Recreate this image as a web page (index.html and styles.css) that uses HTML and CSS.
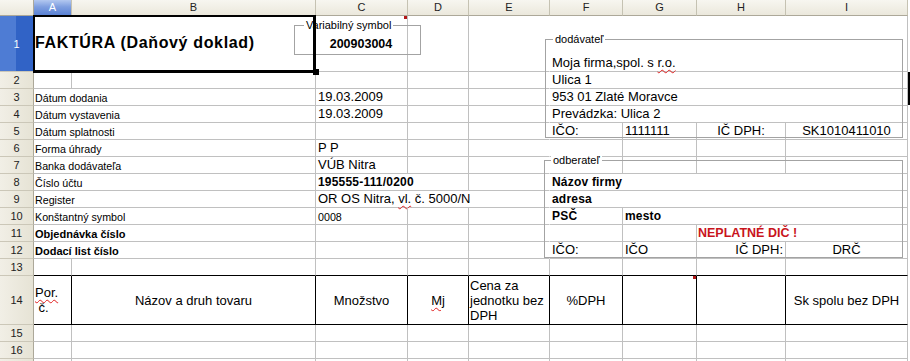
FILE: index.html
```html
<!DOCTYPE html>
<html lang="sk">
<head>
<meta charset="utf-8">
<title>Faktúra</title>
<link rel="stylesheet" href="styles.css">
</head>
<body>
<div class="sheet">
  <!-- column headers -->
  <div class="ch corner"></div>
  <div class="ch ch-sel">A</div>
  <div class="ch">B</div>
  <div class="ch">C</div>
  <div class="ch">D</div>
  <div class="ch">E</div>
  <div class="ch">F</div>
  <div class="ch">G</div>
  <div class="ch">H</div>
  <div class="ch">I</div>

  <!-- row 1 -->
  <div class="rh rh-sel">1</div>
  <div class="c s2 mid title">FAKTÚRA (Daňový doklad)</div>
  <div class="c"><span class="note"></span></div>
  <div class="c"></div>
  <div class="c nr"></div>
  <div class="c s4">Moja firma,spol. s&nbsp;<span class="sp">r.o.</span></div>

  <!-- row 2 -->
  <div class="rh">2</div>
  <div class="c"></div>
  <div class="c"></div>
  <div class="c"></div>
  <div class="c"></div>
  <div class="c nr"></div>
  <div class="c s4">Ulica 1</div>

  <!-- row 3 -->
  <div class="rh">3</div>
  <div class="c s2 lbl">Dátum dodania</div>
  <div class="c">19.03.2009</div>
  <div class="c"></div>
  <div class="c nr"></div>
  <div class="c s4">953 01 Zlaté Moravce</div>

  <!-- row 4 -->
  <div class="rh">4</div>
  <div class="c s2 lbl">Dátum vystavenia</div>
  <div class="c">19.03.2009</div>
  <div class="c"></div>
  <div class="c nr"></div>
  <div class="c s4">Prevádzka: Ulica 2</div>

  <!-- row 5 -->
  <div class="rh">5</div>
  <div class="c s2 lbl">Dátum splatnosti</div>
  <div class="c"></div>
  <div class="c"></div>
  <div class="c nr"></div>
  <div class="c">IČO:</div>
  <div class="c">1111111</div>
  <div class="c ctr">IČ DPH:</div>
  <div class="c ctr">SK1010411010</div>

  <!-- row 6 -->
  <div class="rh">6</div>
  <div class="c s2 lbl">Forma úhrady</div>
  <div class="c">P P</div>
  <div class="c"></div>
  <div class="c nr"></div>
  <div class="c"></div>
  <div class="c"></div>
  <div class="c"></div>
  <div class="c"></div>

  <!-- row 7 -->
  <div class="rh">7</div>
  <div class="c s2 lbl">Banka dodávateľa</div>
  <div class="c">VÚB Nitra</div>
  <div class="c"></div>
  <div class="c nr"></div>
  <div class="c"></div>
  <div class="c"></div>
  <div class="c"></div>
  <div class="c"></div>

  <!-- row 8 -->
  <div class="rh">8</div>
  <div class="c s2 lbl">Číslo účtu</div>
  <div class="c s2 b">195555-111/0200</div>
  <div class="c nr"></div>
  <div class="c s4 b">Názov firmy</div>

  <!-- row 9 -->
  <div class="rh">9</div>
  <div class="c s2 lbl">Register</div>
  <div class="c s3 nr">OR OS Nitra,&nbsp;<span class="sp">vl.</span>&nbsp;č. 5000/N</div>
  <div class="c s4 b">adresa</div>

  <!-- row 10 -->
  <div class="rh">10</div>
  <div class="c s2 lbl">Konštantný symbol</div>
  <div class="c small">0008</div>
  <div class="c"></div>
  <div class="c nr"></div>
  <div class="c b">PSČ</div>
  <div class="c s3 b">mesto</div>

  <!-- row 11 -->
  <div class="rh">11</div>
  <div class="c s2 lbl b-lbl">Objednávka číslo</div>
  <div class="c"></div>
  <div class="c"></div>
  <div class="c nr"></div>
  <div class="c"></div>
  <div class="c"></div>
  <div class="c s2 warn">NEPLATNÉ DIČ !</div>

  <!-- row 12 -->
  <div class="rh">12</div>
  <div class="c s2 lbl b-lbl">Dodací list číslo</div>
  <div class="c"></div>
  <div class="c"></div>
  <div class="c nr"></div>
  <div class="c">IČO:</div>
  <div class="c">IČO</div>
  <div class="c rt">IČ DPH:</div>
  <div class="c ctr">DRČ</div>

  <!-- row 13 -->
  <div class="rh">13</div>
  <div class="c bb"></div>
  <div class="c bb"></div>
  <div class="c bb"></div>
  <div class="c bb"></div>
  <div class="c bb"></div>
  <div class="c bb"></div>
  <div class="c bb"></div>
  <div class="c bb"></div>
  <div class="c bb"></div>

  <!-- row 14 -->
  <div class="rh">14</div>
  <div class="c hd br"><span><span class="sp">Por.</span><br>&nbsp;č.</span></div>
  <div class="c hd br ctr">Názov a druh tovaru</div>
  <div class="c hd br ctr">Množstvo</div>
  <div class="c hd br ctr"><span class="sp">Mj</span></div>
  <div class="c hd br wrap">Cena za jednotku bez DPH</div>
  <div class="c hd br ctr">%DPH</div>
  <div class="c hd br"><span class="note"></span></div>
  <div class="c hd br"></div>
  <div class="c hd ctr">Sk spolu bez DPH</div>

  <!-- row 15 -->
  <div class="rh">15</div>
  <div class="c"></div><div class="c"></div><div class="c"></div><div class="c"></div><div class="c"></div><div class="c"></div><div class="c"></div><div class="c"></div><div class="c"></div>

  <!-- row 16 -->
  <div class="rh">16</div>
  <div class="c"></div><div class="c"></div><div class="c"></div><div class="c"></div><div class="c"></div><div class="c"></div><div class="c"></div><div class="c"></div><div class="c"></div>

  <!-- row 17 (only its top edge is in view) -->
  <div class="rh"></div>
  <div class="c"></div><div class="c"></div><div class="c"></div><div class="c"></div><div class="c"></div><div class="c"></div><div class="c"></div><div class="c"></div><div class="c"></div>

  <!-- overlays: form group boxes, cell cursor, object edge -->
  <div class="frame frame-vs">
    <span class="frame-label">Variabilný symbol</span>
    <span class="vs-value">200903004</span>
  </div>
  <div class="frame frame-dod"><span class="frame-label">dodávateľ</span></div>
  <div class="frame frame-odb"><span class="frame-label">odberateľ</span></div>
  <div class="cursor"></div>
  <div class="handle"></div>
  <div class="edge-bar"></div>
</div>
</body>
</html>
```

FILE: styles.css
```css
html, body {
  margin: 0;
  padding: 0;
  background: #ffffff;
  overflow: hidden;
}

body {
  font-family: "Liberation Sans", Arial, sans-serif;
  color: #000000;
}

.sheet {
  position: relative;
  display: grid;
  grid-template-columns: 34px 38px 244px 92px 61px 81px 73px 74px 89px 122px;
  grid-template-rows: 16px 56px repeat(12, 17px) 49px repeat(3, 17px);
  width: 908px;
}

/* headers */
.ch {
  background: linear-gradient(#f7f6f0, #ebe8dc);
  border-right: 1px solid #c5c2b2;
  border-bottom: 1px solid #aca899;
  font-size: 11px;
  line-height: 15px;
  display: flex;
  justify-content: center;
  align-items: center;
  color: #222;
}

.ch.corner {
  border-right-color: #aca899;
}

.ch-sel {
  background: linear-gradient(#b3c8f0 0%, #7f9fe0 45%, #5a82d4 100%);
  color: #ffffff;
}

.rh {
  background: linear-gradient(to right, #f1efe6, #e6e3d5);
  border-right: 1px solid #aca899;
  border-bottom: 1px solid #cbc7b8;
  font-size: 11px;
  display: flex;
  align-items: center;
  justify-content: center;
  color: #222;
}

.rh-sel {
  background: linear-gradient(to right, #4e7cd4 0%, #4e7cd4 50%, #3163c6 50%, #3163c6 100%);
  color: #ffffff;
}

/* cells */
.c {
  position: relative;
  border-right: 1px solid #c0c0c0;
  border-bottom: 1px solid #c0c0c0;
  display: flex;
  align-items: flex-end;
  padding: 0 2px 1px;
  font-size: 13px;
  line-height: 14px;
  white-space: nowrap;
  min-width: 0;
}

.s2 { grid-column: span 2; }
.s3 { grid-column: span 3; }
.s4 { grid-column: span 4; }

.nr { border-right-color: transparent; }

.ctr { justify-content: center; }
.rt { justify-content: flex-end; }
.mid { align-items: center; }

.lbl {
  font-size: 10.7px;
  padding: 0 1px 0;
}

.b-lbl {
  font-weight: bold;
  font-size: 11px;
}

.b {
  font-weight: bold;
  font-size: 12px;
  letter-spacing: 0.2px;
}

.small {
  font-size: 10.7px;
  padding-bottom: 0;
}

.title {
  font-weight: bold;
  font-size: 16px;
  line-height: 18px;
  letter-spacing: 0.65px;
  padding-left: 1px;
}

.warn {
  font-weight: bold;
  font-size: 12.5px;
  color: #c8141c;
  padding-left: 1px;
}

.sp {
  text-decoration: underline wavy #e02020;
  text-decoration-thickness: 1px;
  text-underline-offset: 2px;
}

/* row 13 / 14 black borders */
.bb { border-bottom-color: #000000; }

.hd {
  border-bottom-color: #000000;
  align-items: center;
  line-height: 15px;
  padding: 0 1px;
}

.br { border-right-color: #000000; }

.wrap {
  white-space: normal;
  align-items: center;
}

/* comment indicator */
.note {
  position: absolute;
  top: 0;
  right: 0;
  width: 3px;
  height: 3px;
  background: #b31818;
}

/* group boxes (form controls drawn over the sheet) */
.frame {
  position: absolute;
  box-sizing: border-box;
  border: 1px solid #a3a3a3;
}

.frame-label {
  position: absolute;
  top: -8px;
  background: #ffffff;
  padding: 0 2px;
  font-size: 11px;
  line-height: 14px;
  white-space: nowrap;
}

.frame-vs {
  left: 294px;
  top: 25px;
  width: 127px;
  height: 30px;
  display: flex;
  justify-content: center;
  align-items: flex-end;
  padding: 0 0 3px 7px;
}

.frame-vs .frame-label { left: 9px; }

.vs-value {
  font-weight: bold;
  font-size: 12.5px;
  line-height: 14px;
}

.frame-dod {
  left: 545px;
  top: 39px;
  width: 358px;
  height: 99px;
}

.frame-dod .frame-label { left: 7px; }

.frame-odb {
  left: 544px;
  top: 160px;
  width: 359px;
  height: 98px;
}

.frame-odb .frame-label { left: 6px; }

/* cell cursor around A1:B1 */
.cursor {
  position: absolute;
  box-sizing: border-box;
  left: 33px;
  top: 15px;
  width: 283px;
  height: 58px;
  border-style: solid;
  border-color: #000000;
  border-width: 2px 3px 3px 2px;
}

.handle {
  position: absolute;
  left: 313px;
  top: 69px;
  width: 6px;
  height: 6px;
  background: #000000;
}

.edge-bar {
  position: absolute;
  left: 908px;
  top: 72px;
  width: 2px;
  height: 33px;
  background: #000000;
}
```
